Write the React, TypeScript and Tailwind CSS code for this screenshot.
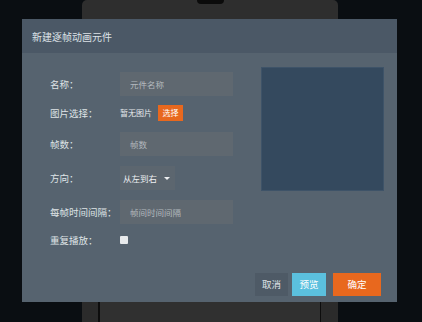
import React from "react";

const font = { fontFamily: '"Noto Sans CJK SC", "Noto Sans", sans-serif' };

function Row({ label, className, children }: { label: string; className: string; children?: React.ReactNode }) {
  return (
    <div className={`flex h-[24px] items-center ${className}`}>
      <div className="w-[70px] shrink-0 text-[9.5px] text-[#dfe3e6]">{label}</div>
      {children}
    </div>
  );
}

function TextBox({ placeholder }: { placeholder: string }) {
  return (
    <div className="flex h-[24px] w-[113px] items-center bg-[#5f6870] pl-[10px] text-[8.5px] text-[#b3b9be]">
      {placeholder}
    </div>
  );
}

export default function App() {
  return (
    <div className="relative h-[322px] w-[422px] overflow-hidden bg-[#0a0e12]" style={font}>
      {/* backdrop: device frame behind the modal */}
      <div className="ml-[82px] flex h-full w-[256px] flex-col rounded-t-[5px] bg-[#2e2e2e]">
        <div className="mx-auto h-[4px] w-[27px] rounded-b-[4px] bg-[#0b0b0b]" />
        <div className="flex-1" />
        <div className="flex h-[22px]">
          <div className="w-[16px] bg-[#2b2b2b]" />
          <div className="w-[2px] bg-[#0d0d0d]" />
          <div className="w-[220px] bg-[#303030]" />
          <div className="w-[1px] bg-[#0d0d0d]" />
          <div className="flex-1 bg-[#2b2b2b]" />
        </div>
      </div>

      {/* modal */}
      <div className="absolute left-[22px] top-[19px] flex h-[283px] w-[375px] flex-col bg-[#56636f]">
        <div className="flex h-[34px] items-center bg-[#4b5866] pl-[10px] text-[10px] text-[#dde2e6]">
          新建逐帧动画元件
        </div>

        <div className="flex">
          <div className="flex w-[211px] flex-col pl-[28px]">
            <Row label="名称：" className="mt-[19px]">
              <TextBox placeholder="元件名称" />
            </Row>
            <Row label="图片选择：" className="mt-[5px]">
              <span className="text-[8px] text-[#e6e9ec]">暂无图片</span>
              <span className="ml-[6px] flex h-[16px] w-[25px] items-center justify-center bg-[#e8681e] text-[8px] text-white">
                选择
              </span>
            </Row>
            <Row label="帧数：" className="mt-[7px]">
              <TextBox placeholder="帧数" />
            </Row>
            <Row label="方向：" className="mt-[10px]">
              <div className="flex h-[24px] w-[55px] items-center justify-between bg-[#5c666f] pl-[3px] pr-[5px] text-[8.5px] text-[#eef0f2]">
                <span>从左到右</span>
                <span className="h-0 w-0 border-x-[3px] border-t-[3px] border-x-transparent border-t-[#eef0f2]" />
              </div>
            </Row>
            <Row label="每帧时间间隔：" className="mt-[10px]">
              <TextBox placeholder="帧间时间间隔" />
            </Row>
            <Row label="重复播放：" className="mt-[4px]">
              <div className="h-[8px] w-[8px] rounded-[1px] bg-[#e8eaec]" />
            </Row>
          </div>

          <div className="ml-[28px] mt-[14px] h-[124px] w-[123px] border border-[#3e5368] bg-[#34495e]" />
        </div>

        <div className="mt-auto mb-[6px] flex justify-end gap-[4px] pr-[16px]">
          <div className="flex h-[23px] w-[33px] items-center justify-center bg-[#4e5a66] text-[9.5px] text-[#dfe3e6]">取消</div>
          <div className="flex h-[23px] w-[34px] items-center justify-center bg-[#5bc0de] text-[9.5px] text-white">预览</div>
          <div className="ml-[3px] flex h-[23px] w-[48px] items-center justify-center bg-[#e8681e] text-[9.5px] text-white">确定</div>
        </div>
      </div>
    </div>
  );
}
